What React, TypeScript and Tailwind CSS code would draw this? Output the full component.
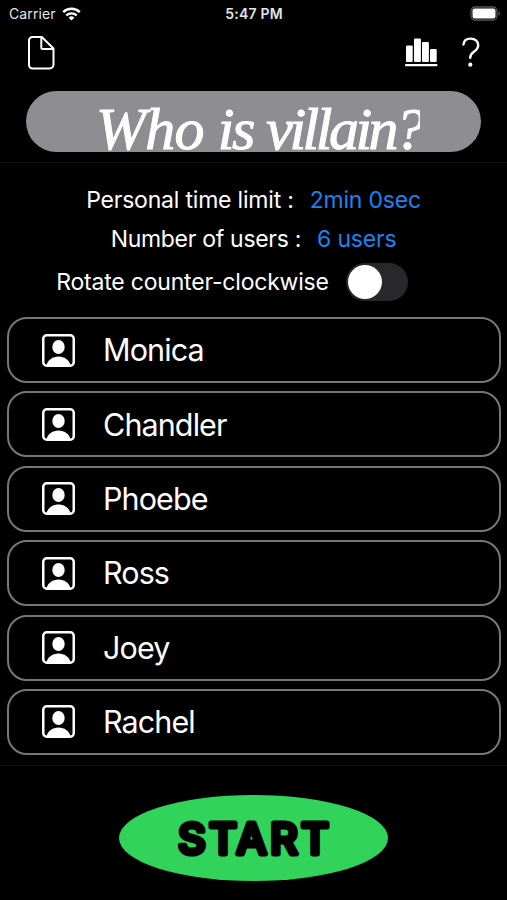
import { useState } from 'react';

const users = ['Monica', 'Chandler', 'Phoebe', 'Ross', 'Joey', 'Rachel'];

function StatusBar() {
  return (
    <div className="grid h-[27px] grid-cols-3 items-center pl-[9px] pr-[8px] text-[#e5e5e5]">
      <div className="flex items-center gap-[6px]">
        <span className="text-[14px] tracking-[0.1px]">Carrier</span>
        <svg viewBox="0 0 19 14" className="h-[14px] w-[19px]" fill="none" stroke="#fff" strokeWidth={2.4}>
          <path d="M1.2 5.2a11.8 11.8 0 0 1 16.6 0" />
          <path d="M4.3 8.5a7.4 7.4 0 0 1 10.4 0" />
          <path d="M9.5 13.6 6.6 10.8a4.1 4.1 0 0 1 5.8 0z" fill="#fff" stroke="none" />
        </svg>
      </div>
      <span className="text-center text-[14px] font-semibold tracking-[0.2px]">5:47 PM</span>
      <svg viewBox="0 0 31 15" className="-mr-[2px] h-[15px] w-[31px] justify-self-end">
        <rect x="1" y="1" width="26" height="13" rx="4" fill="none" stroke="#555" strokeWidth="1.3" />
        <rect x="2.5" y="2.5" width="23" height="10" rx="2" fill="#fff" />
        <path d="M28.5 5.2c2 .8 2 3.8 0 4.6z" fill="#555" />
      </svg>
    </div>
  );
}

function UserIcon() {
  return (
    <svg viewBox="0 0 33 33" className="h-[33px] w-[33px] shrink-0" fill="#fff">
      <rect x="1.25" y="1.25" width="30.5" height="30.5" rx="3.5" fill="none" stroke="#fff" strokeWidth="2.5" />
      <ellipse cx="16.5" cy="13" rx="6.2" ry="6.9" />
      <path d="M4.5 31c1.5-5 6-8.5 12-8.5s10.5 3.5 12 8.5z" />
    </svg>
  );
}

export default function App() {
  const [rotate, setRotate] = useState(false);

  return (
    <div className="flex h-[900px] w-[507px] flex-col overflow-hidden bg-black font-['Inter',sans-serif] text-white">
      <StatusBar />

      {/* Toolbar */}
      <div className="flex h-[64px] items-start justify-between pl-[28px] pr-[27px] pt-[9px]">
        <button aria-label="New">
          <svg viewBox="0 0 27 34" className="h-[34px] w-[27px]" fill="none" stroke="#fff" strokeWidth={2} strokeLinejoin="round">
            <path d="M4.5 1h9.3L25.5 12.5V28.5a4 4 0 0 1-4 4H4.5a3.5 3.5 0 0 1-3.5-3.5V4.5A3.5 3.5 0 0 1 4.5 1z" />
            <path d="M13.3 1v10.5a1.5 1.5 0 0 0 1.5 1.5H25.5" />
          </svg>
        </button>
        <div className="flex items-start gap-[24px]">
          <button aria-label="Statistics">
            <svg viewBox="0 0 33 34" className="h-[34px] w-[33px]" fill="#fff">
              <rect x="1" y="9.5" width="6.7" height="16.5" rx="1" />
              <rect x="9" y="2.5" width="6.9" height="23.5" rx="1" />
              <rect x="17" y="6" width="6.9" height="20" rx="1" />
              <rect x="25" y="13" width="6.7" height="13" rx="1" />
              <rect x="0" y="28" width="32.5" height="2.2" rx="1" />
            </svg>
          </button>
          <button aria-label="Help">
            <svg viewBox="0 0 18 34" className="h-[34px] w-[18px]" fill="none" stroke="#fff" strokeWidth={2.4} strokeLinecap="round">
              <path d="M1.5 8.5C1.7 4.5 4.8 2.6 8.7 2.6c4.3 0 7.5 2.6 7.5 6.6 0 3.3-1.9 4.9-4.3 6.5-2.6 1.7-3.7 3-3.7 6" />
              <circle cx="8.3" cy="28.7" r="2.1" fill="#fff" stroke="none" />
            </svg>
          </button>
        </div>
      </div>

      {/* Title */}
      <div className="h-[72px] border-b border-[#131313] px-[26px]">
        <div className="h-[61px] overflow-hidden rounded-full bg-[#8e8d92] pl-[70px]">
          <h1 className="h-[61px] w-[324px] overflow-hidden whitespace-nowrap pt-[2px] font-['Liberation_Serif',serif] text-[60px] italic leading-[72px] [-webkit-text-stroke:1px_white]">
            <span className="tracking-[-0.8px]">Who </span>
            <span className="tracking-[-2.5px] [word-spacing:1px]">is </span>
            <span className="tracking-[-3.5px]">villain?</span>
          </h1>
        </div>
      </div>

      {/* Settings */}
      <div className="flex h-[154px] flex-col items-center pt-[18px] text-[23px] leading-[39px] tracking-[-0.2px]">
        <div className="flex h-[39px] gap-[16px]">
          <span>Personal time limit :</span>
          <button className="text-[#1a84f0]">2min 0sec</button>
        </div>
        <div className="flex h-[39px] gap-[16px]">
          <span className="tracking-[-0.3px]">Number of users :</span>
          <button className="text-[#1a84f0]">6 users</button>
        </div>
        <div className="mr-[43px] flex h-[46px] items-center gap-[17px]">
          <span>Rotate counter-clockwise</span>
          <button
            role="switch"
            aria-checked={rotate}
            aria-label="Rotate counter-clockwise"
            onClick={() => setRotate(!rotate)}
            className={`flex h-[38px] w-[62px] items-center rounded-full p-[2px] ${rotate ? 'justify-end bg-[#30d158]' : 'bg-[#28282a]'}`}
          >
            <span className="h-[34px] w-[34px] rounded-full bg-white" />
          </button>
        </div>
      </div>

      {/* Users */}
      <ul className="flex h-[449px] flex-col gap-[8.4px] border-b border-[#131313] pl-[7px] pr-[6px]">
        {users.map((name) => (
          <li key={name} className="flex h-[66px] shrink-0 items-center gap-[28px] rounded-[20px] border-2 border-[#777] pl-[33px]">
            <UserIcon />
            <span className="text-[30.5px] tracking-[-0.9px]">{name}</span>
          </li>
        ))}
      </ul>

      {/* Start */}
      <div className="flex flex-1 justify-center pt-[29px]">
        <button aria-label="Start" className="h-[86px] w-[269px] rounded-[50%] bg-[#32d35b]">
          <svg viewBox="0 0 269 86" className="h-[86px] w-[269px]">
            <text
              x="134.5"
              y="58.5"
              textAnchor="middle"
              textLength="151"
              stroke="#000"
              strokeWidth="4.8"
              strokeLinejoin="round"
              className="font-['Inter',sans-serif] text-[43px] font-medium"
            >
              START
            </text>
          </svg>
        </button>
      </div>
    </div>
  );
}
